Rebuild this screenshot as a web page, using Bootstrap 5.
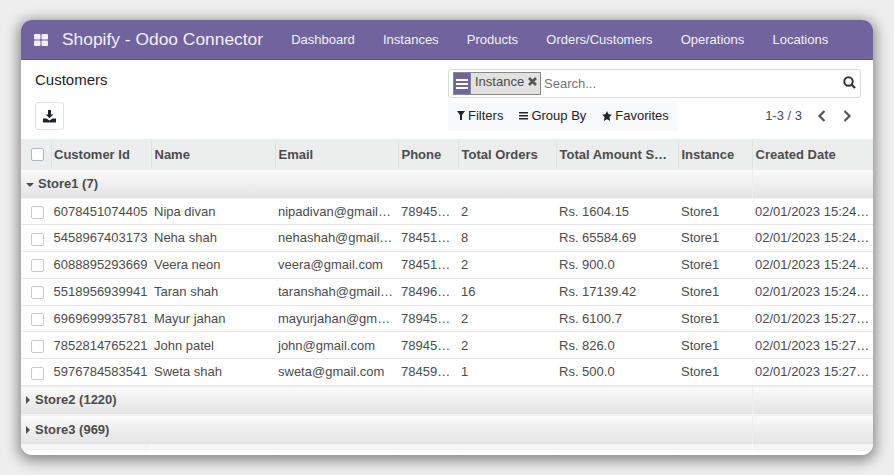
<!DOCTYPE html>
<html lang="en"><head><meta charset="utf-8"><title>Customers</title>
<link rel="stylesheet" href="https://cdn.jsdelivr.net/npm/bootstrap@5.3.0/dist/css/bootstrap.min.css">
<style>
html,body{height:100%;overflow:hidden}
body{background:#eeeeee;font-family:"Liberation Sans",Arial,sans-serif;font-size:13px;color:#4c4c4c;padding:20px 21px}
.app-win{height:435px;background:#fff;border-radius:11px;overflow:hidden;box-shadow:0 3px 13px 3px rgba(0,0,0,.42)}
.top-bar{height:40px;background:#71639e;border-bottom:1px solid #62558c;color:#fff;padding:0 0 0 13px}
.app-mark{width:14px;height:12px;margin-right:14px}
.app-title{font-size:17.4px;color:#f2f0f7;margin-right:14px;white-space:nowrap}
.top-link{color:#f2f0f7;font-size:13px;padding:0 14.1px;text-decoration:none;white-space:nowrap}
.ctl-panel{height:79px;padding:9px 12px 0 14px}
.crumb{font-size:15px;color:#212529;line-height:22px;margin-bottom:11px}
.dl-btn{width:29px;height:28px;border:1px solid #dee2e6;border-radius:3px;background:#fff;padding:0}
.right-ctl{width:413px}
.search-box{height:29px;border:1px solid #d8dadd;border-radius:3px;padding:2px 4px;margin-bottom:4px}
.facet-icon{width:18px;height:23px;background:#71639e;border:1px solid #888}
.facet-val{width:70px;height:23px;background:#e2e2e0;border:1px solid #888;border-left:0;padding:0 3px 5px 4px;color:#4c4c4c;line-height:17px;white-space:nowrap}
.search-ph{color:#6c757d;padding-left:3px;line-height:23px}
.filter-wrap{height:29px;background:#f8f9fa;border-radius:3px;padding:0 9px 2px;color:#212529;gap:16px}
.filter-item{gap:3px}
.pager{color:#4c4c4c;gap:11px;padding:0 7px 2px 0}
.pager-count{margin-right:2px}
.data-grid{table-layout:fixed;width:852px;border-collapse:collapse;margin:0}
.data-grid th{height:31px;background:#eceded;color:#4c4c4c;font-weight:700;padding:0 3px 0 3.500px;white-space:nowrap;position:relative}
.data-grid th:first-child{padding-left:3px}
.data-grid th:not(:first-child)::before{content:"";position:absolute;left:0;top:2px;bottom:2px;width:1px;background:#dfe1e2}
.data-grid td{height:26.8px;padding:0 3px;white-space:nowrap;border-bottom:1px solid #e4e8ec;vertical-align:middle;color:#4c4c4c}
.data-grid tr.grp td{background:linear-gradient(#fafafa,#e3e3e3);font-weight:700;height:28px;color:#4c4c4c;padding-left:5px;border-bottom:1px solid #f3f3f3}
.data-grid tr.grp td.grp-end{padding:0;box-shadow:inset 1px 0 0 #eeeeee}
.data-grid tr.grp2 td{height:29px}
.data-grid tr.grp3 td{height:30px}
.data-grid tr.tail td{height:6px;padding:0;background:#f4f4f4;border:0;box-shadow:inset 1px 0 0 #f9f9f9}
.tick{width:13px;height:13px;border:1px solid #c5cad0;border-radius:2px;background:#fff;display:block;margin-left:7px}
td .tick{margin-top:2px}
th .tick{border-color:#adb5bd}
.tri{display:inline-block;width:0;height:0;vertical-align:1px}
.tri-d{border:4px solid transparent;border-top-color:#4c4c4c;border-bottom:0;margin-right:4px}
.tri-r{border:4px solid transparent;border-left-color:#4c4c4c;border-right:0;margin-right:5px;vertical-align:0}
</style></head><body>
<div class="app-win d-flex flex-column">
<nav class="top-bar d-flex align-items-center">
<svg class="app-mark" viewBox="0 0 14 12"><rect x="0" y="0" width="6.500" height="5.500" rx="1" fill="#f2f0f7"/><rect x="7.500" y="0" width="6.500" height="5.500" rx="1" fill="#f2f0f7"/><rect x="0" y="6.500" width="6.500" height="5.500" rx="1" fill="#f2f0f7"/><rect x="7.500" y="6.500" width="6.500" height="5.500" rx="1" fill="#f2f0f7"/></svg>
<span class="app-title">Shopify - Odoo Connector</span>
<a class="top-link" href="#">Dashboard</a><a class="top-link" href="#">Instances</a><a class="top-link" href="#">Products</a><a class="top-link" href="#">Orders/Customers</a><a class="top-link" href="#">Operations</a><a class="top-link" href="#">Locations</a>
</nav>
<div class="ctl-panel d-flex justify-content-between">
<div>
<div class="crumb">Customers</div>
<button class="dl-btn d-flex align-items-center justify-content-center" type="button" aria-label="Download"><svg width="13" height="13" viewBox="0 0 13 13"><path d="M5 0h3v4.500h2.300L6.500 8.300 2.700 4.500H5z" fill="#212529"/><path d="M0 8.500h3.400l3.100 2 3.100-2H13V12.500H0z" fill="#212529"/></svg></button>
</div>
<div class="right-ctl">
<div class="search-box d-flex align-items-start">
<span class="facet-icon d-flex align-items-center justify-content-center"><svg width="12" height="10" viewBox="0 0 12 10"><path d="M0 0h12v2H0zM0 4h12v2H0zM0 8h12v2H0z" fill="#fff"/></svg></span>
<span class="facet-val d-flex align-items-center justify-content-between">Instance <svg width="9" height="9" viewBox="0 0 9 9"><path d="M1 1l7 7M8 1L1 8" stroke="#555" stroke-width="2.600"/></svg></span>
<span class="search-ph flex-grow-1">Search...</span>
<svg class="mt-1" width="13" height="13" viewBox="0 0 13 13"><circle cx="5.500" cy="5.500" r="4.200" fill="none" stroke="#333" stroke-width="2"/><path d="M8.500 8.500l3.500 3.500" stroke="#333" stroke-width="2.400"/></svg>
</div>
<div class="d-flex justify-content-between align-items-center">
<div class="filter-wrap d-flex align-items-center">
<span class="filter-item d-flex align-items-center"><svg width="8" height="9" viewBox="0 0 8 9"><path d="M0 0h8L5 4v5H3V4z" fill="#212529"/></svg>Filters</span>
<span class="filter-item d-flex align-items-center"><svg width="9" height="8" viewBox="0 0 9 8"><path d="M0 0h9v1.500H0zM0 3h9v1.500H0zM0 6h9v1.500H0z" fill="#212529"/></svg>Group By</span>
<span class="filter-item d-flex align-items-center"><svg width="10" height="10" viewBox="0 0 20 20"><path d="M10 0l3 6.600 7 .8-5.200 4.800L16.200 20 10 16.300 3.800 20l1.400-7.800L0 7.400l7-.8z" fill="#212529"/></svg>Favorites</span>
</div>
<div class="pager d-flex align-items-center">
<span class="pager-count">1-3 / 3</span>
<svg width="14" height="14" viewBox="0 0 14 14"><path d="M9.500 2L4.500 7l5 5" fill="none" stroke="#555" stroke-width="2.200"/></svg>
<svg width="14" height="14" viewBox="0 0 14 14"><path d="M4.500 2l5 5-5 5" fill="none" stroke="#555" stroke-width="2.200"/></svg>
</div>
</div>
</div>
</div>
<table class="data-grid">
<colgroup><col style="width:29.500px"><col style="width:100.500px"><col style="width:124px"><col style="width:123px"><col style="width:60px"><col style="width:98px"><col style="width:122px"><col style="width:74px"><col style="width:121px"></colgroup>
<thead><tr><th><span class="tick"></span></th><th>Customer Id</th><th>Name</th><th>Email</th><th>Phone</th><th>Total Orders</th><th>Total Amount S…</th><th>Instance</th><th>Created Date</th></tr></thead>
<tbody>
<tr class="grp"><td colspan="8"><span class="tri tri-d"></span>Store1 (7)</td><td class="grp-end"></td></tr>
<tr><td><span class="tick"></span></td><td>6078451074405</td><td>Nipa divan</td><td>nipadivan@gmail…</td><td>78945…</td><td>2</td><td>Rs. 1604.15</td><td>Store1</td><td>02/01/2023 15:24…</td></tr>
<tr><td><span class="tick"></span></td><td>5458967403173</td><td>Neha shah</td><td>nehashah@gmail…</td><td>78451…</td><td>8</td><td>Rs. 65584.69</td><td>Store1</td><td>02/01/2023 15:24…</td></tr>
<tr><td><span class="tick"></span></td><td>6088895293669</td><td>Veera neon</td><td>veera@gmail.com</td><td>78451…</td><td>2</td><td>Rs. 900.0</td><td>Store1</td><td>02/01/2023 15:24…</td></tr>
<tr><td><span class="tick"></span></td><td>5518956939941</td><td>Taran shah</td><td>taranshah@gmail…</td><td>78496…</td><td>16</td><td>Rs. 17139.42</td><td>Store1</td><td>02/01/2023 15:24…</td></tr>
<tr><td><span class="tick"></span></td><td>6969699935781</td><td>Mayur jahan</td><td>mayurjahan@gm…</td><td>78945…</td><td>2</td><td>Rs. 6100.7</td><td>Store1</td><td>02/01/2023 15:27…</td></tr>
<tr><td><span class="tick"></span></td><td>7852814765221</td><td>John patel</td><td>john@gmail.com</td><td>78945…</td><td>2</td><td>Rs. 826.0</td><td>Store1</td><td>02/01/2023 15:27…</td></tr>
<tr><td><span class="tick"></span></td><td>5976784583541</td><td>Sweta shah</td><td>sweta@gmail.com</td><td>78459…</td><td>1</td><td>Rs. 500.0</td><td>Store1</td><td>02/01/2023 15:27…</td></tr>
<tr class="grp grp2"><td colspan="8"><span class="tri tri-r"></span>Store2 (1220)</td><td class="grp-end"></td></tr>
<tr class="grp grp3"><td colspan="8"><span class="tri tri-r"></span>Store3 (969)</td><td class="grp-end"></td></tr>
<tr class="tail"><td></td><td></td><td></td><td></td><td></td><td></td><td></td><td></td><td></td></tr>
</tbody></table>
</div>
<script src="https://cdn.jsdelivr.net/npm/bootstrap@5.3.0/dist/js/bootstrap.bundle.min.js"></script>
</body></html>
